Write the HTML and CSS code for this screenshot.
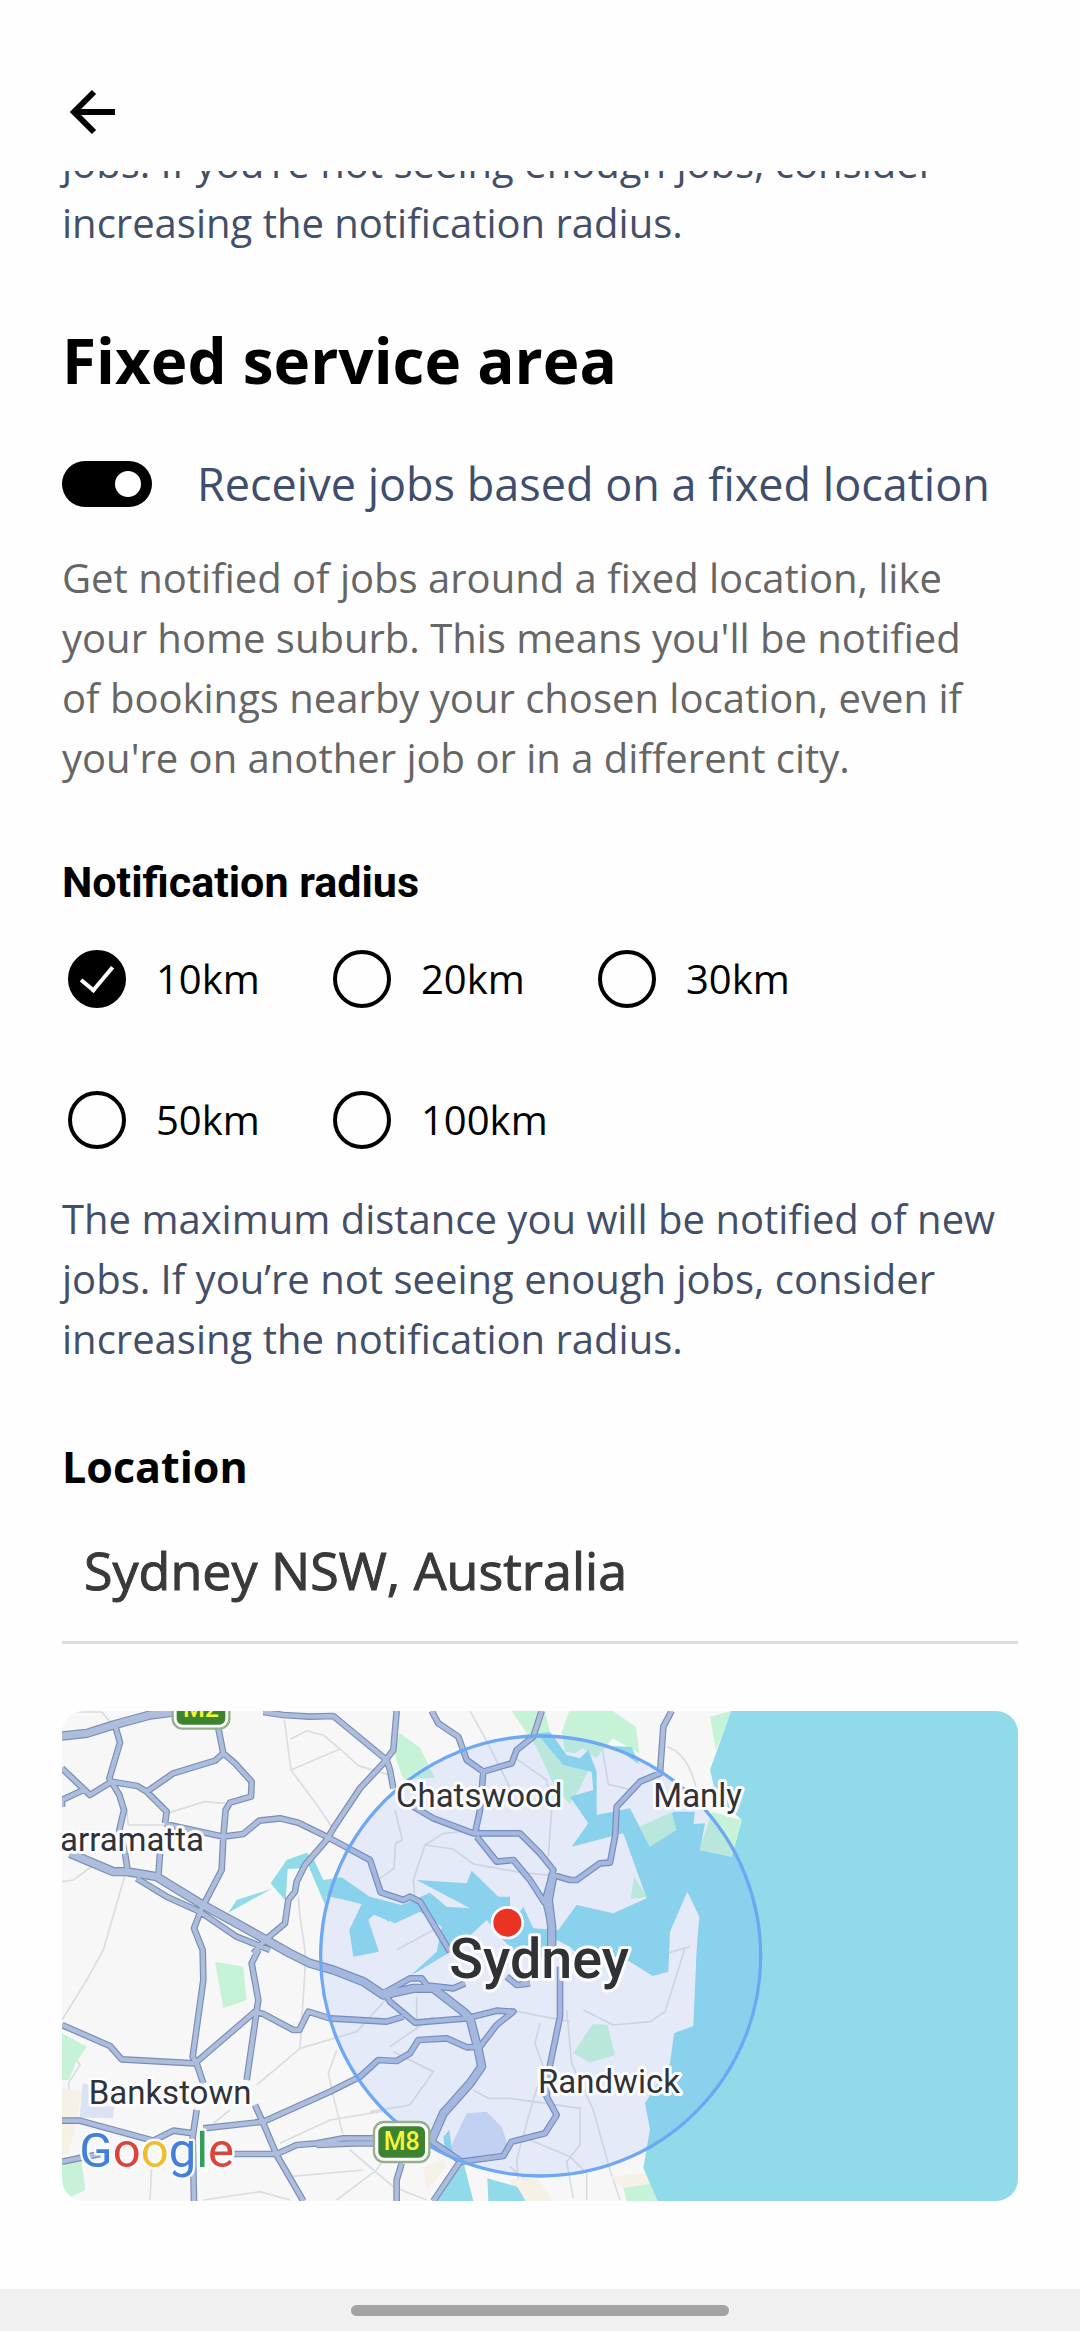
FILE: index.html
```html
<!DOCTYPE html>
<html lang="en">
<head>
<meta charset="utf-8">
<meta name="viewport" content="width=device-width, initial-scale=1">
<title>Fixed service area</title>
<link rel="stylesheet" href="styles.css">
</head>
<body>
<header class="topbar">
  <button class="back" type="button" aria-label="Back">
    <svg viewBox="0 0 48 48" width="48" height="48" fill="none" stroke="#000" stroke-width="6" aria-hidden="true"><path d="M47 24H7M26 4 6 24l20 20"/></svg>
  </button>
</header>

<main class="content">
  <p class="hint">jobs. If you’re not seeing enough jobs, consider increasing the notification radius.</p>

  <h1 class="title">Fixed service area</h1>

  <label class="toggle">
    <input class="switch" type="checkbox" role="switch" checked>
    <span>Receive jobs based on a fixed location</span>
  </label>
  <p class="description">Get notified of jobs around a fixed location, like your home suburb. This means you'll be notified of bookings nearby your chosen location, even if you're on another job or in a different city.</p>

  <fieldset class="radius">
    <legend class="radius-title">Notification radius</legend>
    <div class="options">
      <label class="option"><input type="radio" name="radius" value="10" checked><span>10km</span></label>
      <label class="option"><input type="radio" name="radius" value="20"><span>20km</span></label>
      <label class="option"><input type="radio" name="radius" value="30"><span>30km</span></label>
      <label class="option"><input type="radio" name="radius" value="50"><span>50km</span></label>
      <label class="option"><input type="radio" name="radius" value="100"><span>100km</span></label>
    </div>
  </fieldset>
  <p class="hint">The maximum distance you will be notified of new jobs. If you’re not seeing enough jobs, consider increasing the notification radius.</p>

  <label class="field-label" for="location">Location</label>
  <input class="field" id="location" type="text" value="Sydney NSW, Australia">

  <svg class="map" viewBox="36 33 2868 1470" role="img" aria-label="Map of Sydney with a 10km radius">
    <rect class="land" x="36" y="33" width="2868" height="1470"/>

    <!-- minor roads -->
    <g class="minor">
      <path d="M80 36h75l30 35M36 545l35-5 60-45M225 525l-65 225-50 90-74 120M230 330l5 45h120M350 340l115-35 60 5M703 60l20 150 85 115 40 60M720 118l50-25 50 12 50 42 55 50 100 30M723 210l145-62M745 590l5 60 15 100v60l-15 235-130 110M750 1045l170-50 100-110M860 1050l-25 70 15 70 28 110M690 1330l150-70 170-28M720 1430l220-20M460 1500l170-25 90 25M305 1400l-5 100M490 1270l50-40M1260 33l50 90 70 140M1035 330l22 90-20 10-5 75-42 30M1095 600l-5-60 35-105 55-35 110-10M1125 435l85 12 60 45 140 25 100 10M1390 170l100 70 15 90-10 140M1625 33l30 100 20 120 85 20M1850 140q65 20 90 130M1470 970l-15 60 25 70-45 150-35 130 5 60M1550 930l15 160 65 140 50 180 30 90M1600 930l90 45 110-10 45-30 60-190M1380 930l180 35M1270 1170l45 25 65 0 210 30v110l-40 50 20 110M1440 1320l120 50 50 50v80M1380 1400l120 100M900 1350l130 110 100 40M1030 1330l-50 80-120 90M960 1235l120-20 70-100-120-60M1150 950l-130 90M1100 890v100M1850 760l70-20M1040 750l110-60M40 1020l50 75-35 55 15 130"/>
    </g>

    <!-- parks, airports and industrial land -->
    <g class="park">
      <path d="M1048 98l62 45 45 90-95 5-28-80zM1385 33h100l30 130 100 50-30 60-25 40-50-60-50-110zM1558 33h130l70 47 10 80-80-45-50 60-40-30-23 15-30-5-10-60zM2043 33l-63 17 18 100zM36 1000l75 40-35 50-18 50H36zM36 1385l55-25 15 110-70 33zM495 785l85 15 10 100-70 25zM1628 972l45 3 22 90-75 23-50-28zM1718 1455l82-10 20 58h-90z"/>
    </g>
    <path class="sand" d="M36 1165l60 10-15 80-25 110H36zM1680 1430l110-10 20 30-90 15zM1380 1440l80-10 50 73h-90zM1120 1400l60-20 10 20-60 70z"/>
    <path class="works" d="M98 1150l22 5 5 60 68 5-4 35-100-2z"/>
    <path class="airport" d="M1250 1240l60-5 45 45 20 60-20 30-130 15-25-40z"/>

    <!-- ocean and harbour -->
    <g class="water">
      <path d="M2043 33H2904V1503H1822L1780 1403 1800 1288 1785 1210 1860 1090 1872 1000 1930 978 1940 748 1948 650 1912 575 1860 695 1855 815 1808 828 1740 785 1700 770 1650 790 1600 780 1560 740 1520 720 1480 780 1440 740 1400 760 1350 710 1310 660 1220 745 1080 828 1160 755 1175 680 1110 635 1035 670 960 640V590L1055 615 1140 578 1190 620 1260 625 1100 540 1250 550 1265 512 1345 590H1380V680L1420 620 1450 685 1525 690 1580 615 1690 640 1790 595 1720 400 1565 440 1615 370 1560 290 1630 270 1625 215 1540 195 1460 100 1500 95 1550 165 1590 175 1615 150 1640 215V345L1740 325 1800 440 1870 335 1935 335 1930 372 1965 370 1950 450 2045 470 2075 360 2000 290 1980 210z"/>
      <path d="M535 638l25-38 105-34zM662 550l48-70 60-22 18 17-38 30-37 2-6 95zM772 490l20-10 28 60 55-8 105 73 60 15-25 45-35-30-25 25 32 95-77 15-12-80 37-78-105-25-5 27zM1240 1385l30 118h-110zM1312 1435l90 25 25 43h-112zM1180 1310l18-20 10 75-20 5zM1690 138l55 3 22 52z"/>
    </g>
    <g class="park">
      <path d="M1768 380l97-43 15 53-80 50zM1985 335l88 25-28 110-97-20 25-75zM1752 530l40 62-50 5z"/>
    </g>

    <!-- main roads: the casing, then the fill on the same lines -->
    <defs>
      <g id="roads">
        <path d="M195 75l15 53-32 107 30 50 14 45-14 60 17 70 7 45M36 205l84 80 65-40 77 13 28 17 60 60-5 35M36 320v-20l69-32M290 275l80-55 125-38 25-22-15-75M520 160l35 30 50 55-2 45-63 18-13 22-7 80-5 100-60 115-23 60 26 65 2 90-32 230 12 20 20 60M440 1230l-12 80 4 193M345 372l175 38 60-8 48-40 62-7 55 13 95 47 120 65 32 97 68 23 20-10 30 15 90 150M640 36l60 9 80 5 70-2 160 132 10 30 10 55M1040 33l-10 117-30 40-70 75-80 120-20 35-65 75-25 50-5 30-20 25-10 70-60 50-35 40M325 530l5-70M36 975l144 63 35 40 220 12 180-155 25 7 90 48h18l27-55 65 20 170 10 50-15M625 750l-20 40 20 110-35 240M615 1215l25 55 40 95 80 138M460 1285l180-20 200-90 90-45 55-50 55 3 40-23 25-40 85-5 60 27 40-2 50-65 50-40-50-3-90 23-155 13-75-63-20-35M1000 880l80-45h35l15 20M1120 855l90 10 35-15M1370 830l30 25 40-5M1140 1320l95 65 125-17 25-43 100-25 35-55-30-55 5-70 35-170v-150M1500 750l5-70-20-80 25-90-40-50-60-60H1270l-120-45-60-35M1280 410l60 75 50-5 50 60 45 70M1300 215l-10 115-15 70M1145 33l20 37 60 40 25 70 50 35 85-25 15-40 50-40 25-77M1510 525l50 15h20l70-50 30-2 15-78 5-90 70-75 60-25 10-140 25-47M1230 1385l-80 118M1055 1390l-15 50v63M36 1262h54l220 60 60-30 60 8M36 1385l114-23M550 1362h130l60-27 60-5 80-15h120M800 1335l110-5h90M260 535l90 55 100 45 110 75 100 40"/>
      </g>
      <g id="motorways">
        <path d="M36 108l74-8 80-25 110-30 80-10M60 460l130 55h40l90 15 130 80 110 60 160 90 60 30 70 20 90 35 60 40 90-20h60l90 70 20 20 25 95 10 50-35 50-80 90-35 80M1505 740l0-60-10-80 15-80"/>
      </g>
    </defs>
    <use class="casing" href="#roads"/>
    <use class="casing wide" href="#motorways"/>
    <use class="road" href="#roads"/>
    <use class="road wide" href="#motorways"/>

    <circle class="range" cx="1472" cy="768" r="660"/>

    <!-- place names -->
    <g class="place">
      <text x="30" y="452">arramatta</text>
      <text x="1038" y="320">Chatswood</text>
      <text x="1810" y="322">Manly</text>
      <text x="116" y="1212">Bankstown</text>
      <text x="1464" y="1178">Randwick</text>
    </g>
    <text class="city" x="1198" y="833">Sydney</text>

    <!-- motorway shields -->
    <g class="shield">
      <rect x="368" y="-30" width="170" height="116" rx="30"/>
      <rect class="plate" x="380" y="-20" width="146" height="94" rx="18"/>
      <text x="453" y="52">M2</text>
      <rect x="972" y="1266" width="166" height="120" rx="30"/>
      <rect class="plate" x="985" y="1279" width="140" height="94" rx="18"/>
      <text x="1055" y="1350">M8</text>
    </g>

    <circle class="pin" cx="1372" cy="668" r="46"/>

    <text class="brand" x="88" y="1401"><tspan class="blue">G</tspan><tspan class="red">o</tspan><tspan class="yellow">o</tspan><tspan class="blue">g</tspan><tspan class="green">l</tspan><tspan class="red">e</tspan></text>
  </svg>
</main>

<footer class="navbar"><span class="handle"></span></footer>
</body>
</html>
```

FILE: styles.css
```css
* { box-sizing: border-box; }

body {
  margin: 0;
  min-height: 100vh;
  display: flex;
  flex-direction: column;
  background: #fefefe;
  color: #000;
  font-family: "Open Sans", "Noto Sans", sans-serif;
  font-size: 40px;
  line-height: 60px;
}

.topbar {
  position: sticky;
  top: 0;
  z-index: 1;
  padding: 88px 68px 35px;
  background: #fefefe;
}

.back {
  display: block;
  width: 48px;
  height: 48px;
  padding: 0;
  border: 0;
  background: none;
}

.back svg { display: block; }

.content {
  flex: 1;
  display: flex;
  flex-direction: column;
  margin-top: -38px;
  padding: 0 62px 88px;
}

.hint, .description { margin: 0; }
.hint { color: #434f69; }

.description {
  margin-top: 34px;
  padding-right: 32px;
  color: #666;
}

.title {
  margin: 63px 0 0;
  font-size: 62px;
  line-height: 88px;
  font-weight: 700;
}

.toggle {
  display: flex;
  align-items: center;
  gap: 45px;
  margin-top: 50px;
  color: #3f4e6d;
  font-size: 45px;
}

.switch {
  appearance: none;
  flex: none;
  display: flex;
  align-items: center;
  justify-content: flex-end;
  width: 90px;
  height: 46px;
  margin: 0;
  padding: 0 11px;
  border-radius: 23px;
  background: #000;
}

.switch::before {
  content: "";
  width: 26px;
  height: 26px;
  border-radius: 50%;
  background: #fff;
}

.switch:not(:checked) { justify-content: flex-start; background: #999; }

.radius {
  min-width: 0;
  margin: 64px 0 0;
  padding: 0;
  border: 0;
}

.radius-title {
  padding: 0;
  font-family: Roboto, sans-serif;
  font-size: 43px;
  font-weight: 700;
}

.options {
  display: grid;
  grid-template-columns: repeat(auto-fill, 265px);
  row-gap: 81px;
  margin: 37px 0 39px;
}

.option {
  display: flex;
  align-items: center;
  gap: 30px;
  padding-left: 6px;
}

.option input {
  appearance: none;
  flex: none;
  width: 58px;
  height: 58px;
  margin: 0;
  border: 4px solid #000;
  border-radius: 50%;
}

.option input:checked {
  display: grid;
  place-items: center;
  background: #000;
}

.option input:checked::before {
  content: "";
  width: 14px;
  height: 28px;
  margin-bottom: 8px;
  border: solid #fff;
  border-width: 0 4px 4px 0;
  rotate: 40deg;
}

.field-label {
  margin-top: 68px;
  font-size: 43px;
  font-weight: 700;
}

.field {
  width: 100%;
  height: 147px;
  padding: 0 22px;
  border: 0;
  border-bottom: 3px solid #ddd;
  background: none;
  color: #393939;
  font: 400 52px/72px "Open Sans", "Noto Sans", sans-serif;
  -webkit-text-stroke: 1px #393939;
}

.map {
  display: block;
  width: 100%;
  height: auto;
  margin-top: 67px;
  border-radius: 22px;
}

.land { fill: #f7f7f7; }
.park { fill: #c6f3d8; }
.sand { fill: #f6f1e6; }
.works { fill: #dbe3f2; }
.airport { fill: #d0daf1; }
.water { fill: #90daea; }

.minor {
  fill: none;
  stroke: #dcdde0;
  stroke-width: 5;
}

.casing, .road { fill: none; stroke-linejoin: round; }
.casing { stroke: #7a8db5; stroke-width: 20; }
.road { stroke: #adbddc; stroke-width: 13; }
.casing.wide { stroke-width: 28; }
.road.wide { stroke-width: 21; }

.range {
  fill: rgb(85 135 255 / 11%);
  stroke: #6ea7f3;
  stroke-width: 10;
}

.place, .city {
  fill: #303236;
  stroke: #fcfcff;
  stroke-width: 18;
  stroke-linejoin: round;
  paint-order: stroke;
  font-family: Roboto, sans-serif;
}

.place { font-size: 99px; }
.city { font-size: 167px; font-weight: 500; }

.shield {
  fill: #fff;
  stroke: #98af8b;
  stroke-width: 7;
}

.shield .plate { fill: #3d8430; stroke: none; }

.shield text {
  fill: #f4f53c;
  stroke: none;
  font: 500 75px Roboto, sans-serif;
  text-anchor: middle;
}

.pin {
  fill: #ea3323;
  stroke: #fff;
  stroke-width: 8;
}

.brand {
  stroke: #fafbff;
  stroke-width: 14;
  stroke-linejoin: round;
  paint-order: stroke;
  font: 400 147px Roboto, sans-serif;
}

.blue { fill: #4380dc; }
.red { fill: #dc4438; }
.yellow { fill: #f2bd2c; }
.green { fill: #319f58; }

.navbar {
  display: flex;
  justify-content: center;
  padding: 16px 0 15px;
  background: #f0f0f0;
}

.handle {
  width: 35%;
  height: 11px;
  border-radius: 6px;
  background: #a3a3a3;
}
```
